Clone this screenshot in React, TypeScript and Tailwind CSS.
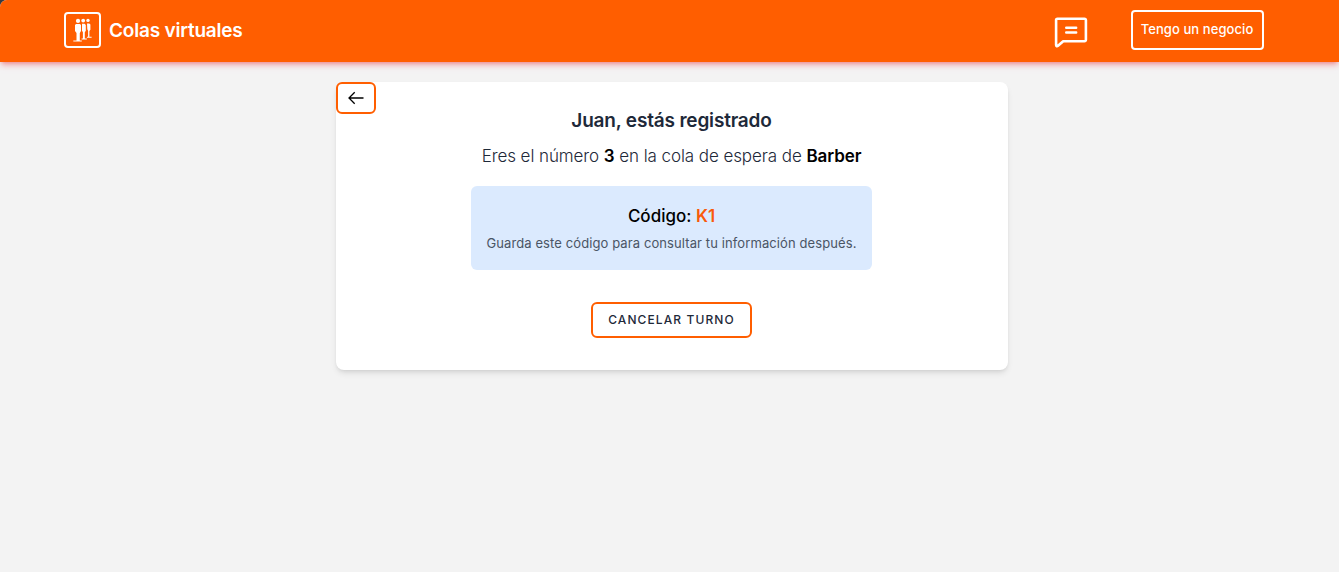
function QueueLogo() {
  return (
    <svg viewBox="0 0 24 28" className="h-7 w-6" fill="white" aria-hidden="true">
      <circle cx="7" cy="4.9" r="2.1" />
      <circle cx="12.2" cy="4.6" r="1.9" />
      <circle cx="17" cy="4.4" r="1.7" />
      <path d="M5 8h4l1 1v6l-1.2 2v7.4h2v1H2.3v-1h3.2V17L4 15V9z" />
      <path d="M11 7.8h2.6l1.2 1.2v5.7l-1 1.5v6.3h2v1h-5.2v-1h1.3v-6.3l-.9-1.4z" />
      <path d="M16 7.4h2.3l1.1 1.1v5.2l-1 1.3v5.7h2.2v1h-4.7v-1h1.2v-6l-.8-1.5z" />
    </svg>
  );
}

function ChatIcon() {
  return (
    <svg viewBox="0 0 34 32" className="h-8 w-[34px]" fill="none" stroke="white" strokeWidth="2.6" strokeLinejoin="round" strokeLinecap="round" aria-hidden="true">
      <path d="M3.5 2.7h27a1.4 1.4 0 0 1 1.4 1.4v19.7a1.4 1.4 0 0 1-1.4 1.4H9.2L4 29.8c-.9.8-1.9.4-1.9-.7v-25a1.4 1.4 0 0 1 1.4-1.4Z" />
      <path d="M12.2 11.7h10M12.2 16.5h10" strokeWidth="2.4" />
    </svg>
  );
}

function Header() {
  return (
    <header className="flex h-[62px] items-center justify-between bg-[#ff5e00] pr-[75px] pl-16 text-white shadow-md shadow-red-600/30">
      <div className="flex items-center gap-2 pb-0.5">
        <div className="flex h-9 w-[37px] items-center justify-center rounded border-2 border-white">
          <QueueLogo />
        </div>
        <span className="pt-0.5 text-[19px] leading-7 font-semibold tracking-[-0.2px] whitespace-nowrap">Colas virtuales</span>
      </div>
      <div className="flex items-center gap-[43px] pb-0.5">
        <button type="button" aria-label="Mensajes" className="mt-1">
          <ChatIcon />
        </button>
        <button type="button" className="flex h-10 w-[133px] items-center justify-center rounded border-2 border-white pr-px pb-px text-[13px] font-medium tracking-[0.08px] whitespace-nowrap">
          Tengo un negocio
        </button>
      </div>
    </header>
  );
}

export default function App() {
  return (
    <div className="bg-[#343a40]">
      <div className="min-h-screen overflow-hidden rounded-tl-[7px] bg-[#f3f3f3] font-['Inter',sans-serif]">
        <Header />
        <main className="mt-5 ml-[336px] flex h-72 w-2xl flex-col rounded-lg bg-white shadow-md">
          <button type="button" aria-label="Volver" className="flex h-8 w-10 items-center justify-center rounded-md border-2 border-[#ff5e00] bg-white">
            <svg viewBox="0 0 16 14" className="h-3.5 w-4" fill="none" stroke="black" strokeWidth="1.3" aria-hidden="true">
              <path d="M15.5 7H1M6.7 1.2 1 7l5.7 5.8" />
            </svg>
          </button>
          <div className="-mt-[7px] flex flex-col items-center pr-px">
            <h1 className="text-[19px] leading-7 font-semibold tracking-[-0.18px] text-gray-800">Juan, estás registrado</h1>
            <p className="mt-[7px] text-[17px] leading-7 font-light tracking-[-0.08px] whitespace-nowrap text-gray-800">
              Eres el número <span className="font-semibold text-black">3</span> en la cola de espera de{" "}
              <span className="font-semibold text-black">Barber</span>
            </p>
            <section className="mt-4 flex h-[84px] w-[401px] flex-col items-center rounded-md bg-blue-100 pt-4">
              <p className="text-[17px] leading-7 font-medium text-black">
                Código: <span className="font-semibold text-[#f95a0c]">K1</span>
              </p>
              <p className="mt-[3px] text-[13px] leading-5 tracking-[0.1px] whitespace-nowrap text-gray-600">
                Guarda este código para consultar tu información después.
              </p>
            </section>
            <button type="button" className="mt-8 flex h-9 w-[161px] items-center justify-center rounded-md border-2 border-[#ff5e00] bg-white text-xs font-medium tracking-[1.1px] whitespace-nowrap text-gray-800">
              CANCELAR TURNO
            </button>
          </div>
        </main>
      </div>
    </div>
  );
}
